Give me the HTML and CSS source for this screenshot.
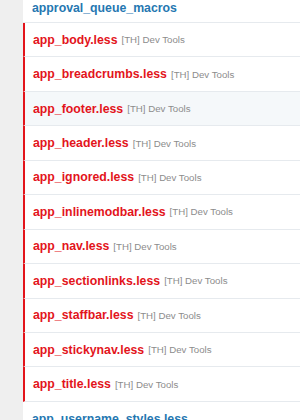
FILE: index.html
```html
<!DOCTYPE html>
<html lang="en">
<head>
  <meta charset="UTF-8">
  <title>Templates</title>
  <link rel="stylesheet" href="styles.css">
</head>
<body>
  <div class="page">
    <div class="sidebar"></div>
    <ul class="template-list">
      <li class="item first"><a class="title">approval_queue_macros</a></li>
      <li class="item custom"><a class="title">app_body.less</a><span class="addon">[TH] Dev Tools</span></li>
      <li class="item custom"><a class="title">app_breadcrumbs.less</a><span class="addon">[TH] Dev Tools</span></li>
      <li class="item custom hover"><a class="title">app_footer.less</a><span class="addon">[TH] Dev Tools</span></li>
      <li class="item custom"><a class="title">app_header.less</a><span class="addon">[TH] Dev Tools</span></li>
      <li class="item custom"><a class="title">app_ignored.less</a><span class="addon">[TH] Dev Tools</span></li>
      <li class="item custom"><a class="title">app_inlinemodbar.less</a><span class="addon">[TH] Dev Tools</span></li>
      <li class="item custom"><a class="title">app_nav.less</a><span class="addon">[TH] Dev Tools</span></li>
      <li class="item custom"><a class="title">app_sectionlinks.less</a><span class="addon">[TH] Dev Tools</span></li>
      <li class="item custom"><a class="title">app_staffbar.less</a><span class="addon">[TH] Dev Tools</span></li>
      <li class="item custom"><a class="title">app_stickynav.less</a><span class="addon">[TH] Dev Tools</span></li>
      <li class="item custom"><a class="title">app_title.less</a><span class="addon">[TH] Dev Tools</span></li>
      <li class="item"><a class="title">app_username_styles.less</a></li>
    </ul>
  </div>
</body>
</html>
```

FILE: styles.css
```css
body {
  margin: 0;
  font-family: 'Liberation Sans', Arial, sans-serif;
  background: #ffffff;
  overflow: hidden;
}

.page {
  display: flex;
  height: 420px;
}

.sidebar {
  width: 23px;
  flex-shrink: 0;
  background-color: #efefef;
}

.template-list {
  flex: 1;
  list-style: none;
  margin: 0;
  padding: 0;
}

.item {
  display: flex;
  align-items: center;
  gap: 4px;
  height: 33.45px;
  padding-left: 9px;
  border-bottom: 1px solid #e6eaee;
}

.item.first {
  height: 15px;
  padding-bottom: 7px;
}

.item .title {
  font-size: 12.3px;
  font-weight: bold;
  color: #2577b1;
}

.item.custom {
  border-left: 2px solid #e3141b;
  padding-left: 8px;
}

.item.custom .title {
  color: #e3141b;
}

.item.hover {
  background-color: #f5f8fa;
}

.addon {
  font-size: 9.7px;
  color: #8c8c8c;
}
```
